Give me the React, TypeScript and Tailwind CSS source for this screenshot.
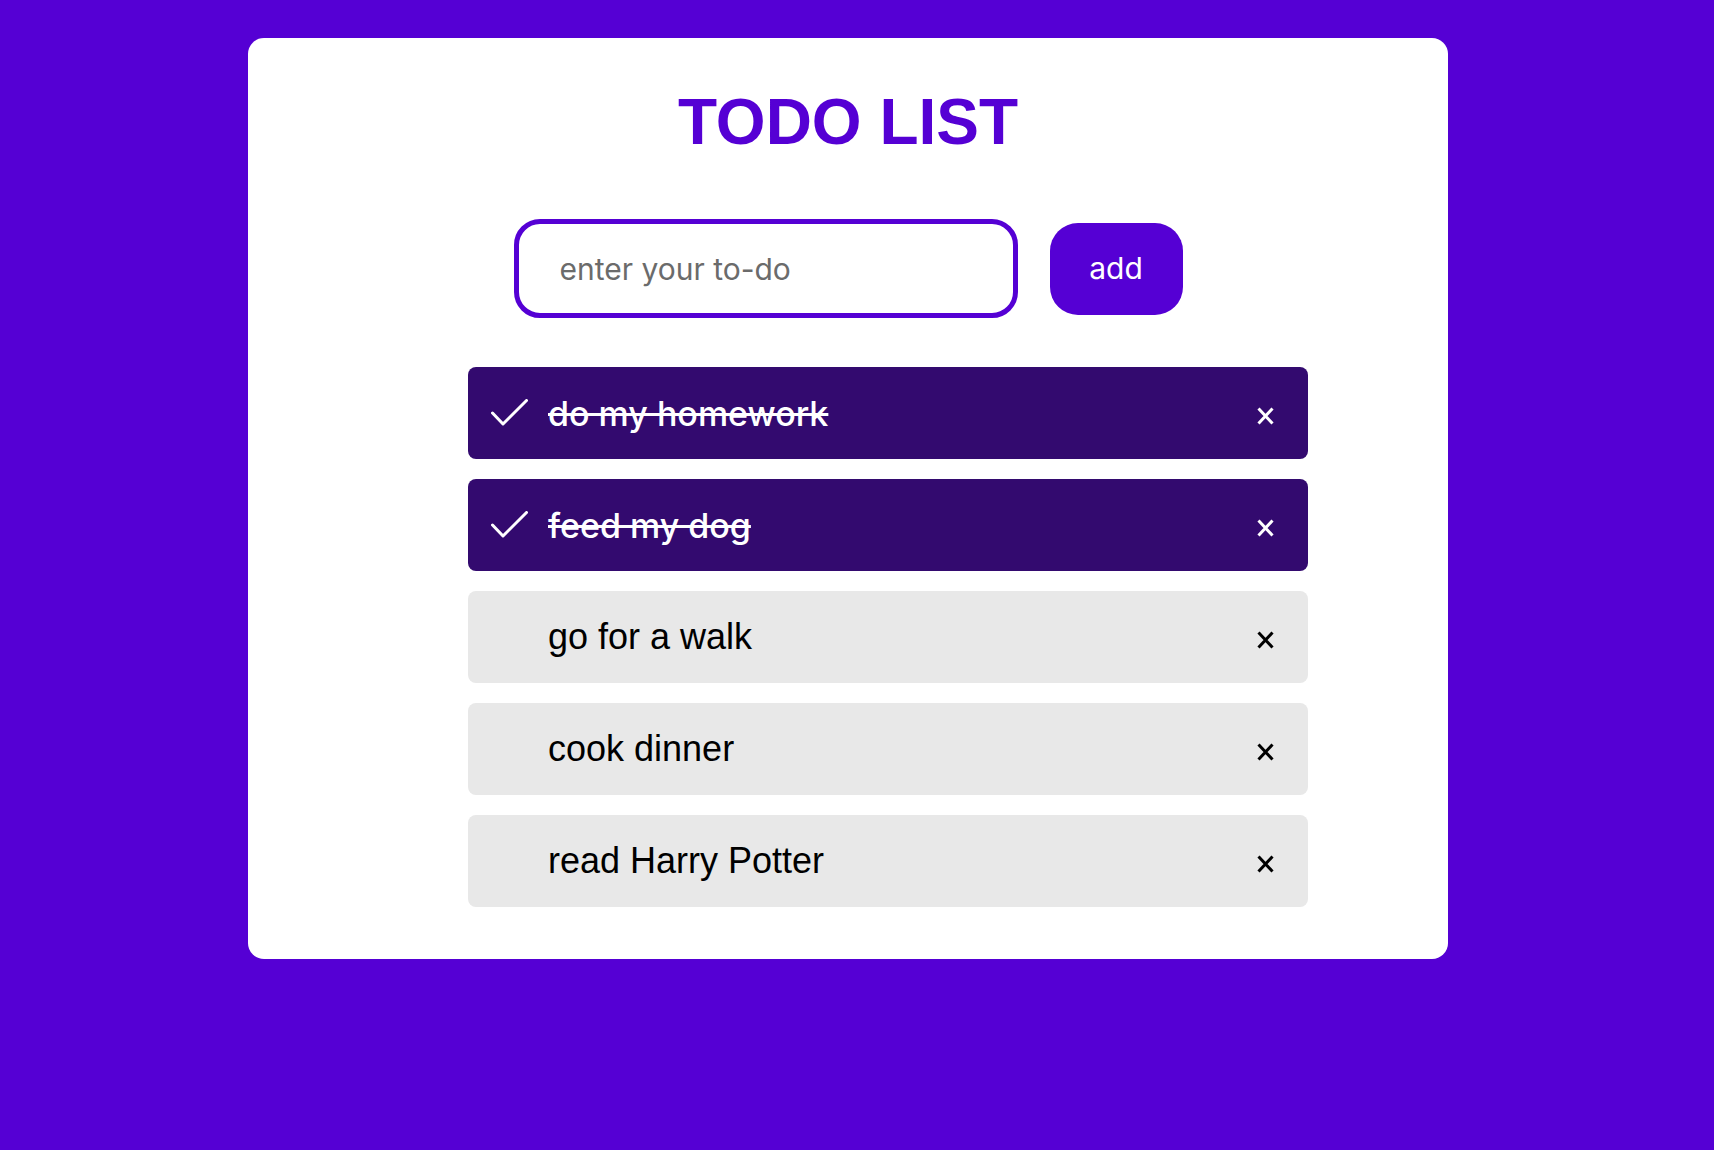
import { useState } from "react";

type Todo = { id: number; task: string; completed: boolean };

const initialTodos: Todo[] = [
  { id: 1, task: "do my homework", completed: true },
  { id: 2, task: "feed my dog", completed: true },
  { id: 3, task: "go for a walk", completed: false },
  { id: 4, task: "cook dinner", completed: false },
  { id: 5, task: "read Harry Potter", completed: false },
];

const Check = () => (
  <svg width="37" height="28" viewBox="0 0 37 28" fill="none">
    <polyline
      points="1.5,14 12,25 35.5,1.5"
      stroke="white"
      strokeWidth="3"
      strokeLinecap="round"
      strokeLinejoin="round"
    />
  </svg>
);

const Cross = ({ color }: { color: string }) => (
  <svg width="17" height="18" viewBox="0 0 17 18" fill="none">
    <path d="M1.5 1.5 L15.5 16.5 M15.5 1.5 L1.5 16.5" stroke={color} strokeWidth="3" />
  </svg>
);

const App = () => {
  const [todos, setTodos] = useState<Todo[]>(initialTodos);
  const [task, setTask] = useState("");

  const handleAdd = () => {
    if (!task.trim()) return;
    setTodos((prev) => [...prev, { id: Date.now(), task, completed: false }]);
    setTask("");
  };

  const handleToggle = (id: number) => {
    setTodos(todos.map((t) => (t.id === id ? { ...t, completed: !t.completed } : t)));
  };

  const handleDelete = (id: number) => {
    setTodos(todos.filter((t) => t.id !== id));
  };

  return (
    <main className="w-full min-h-[1150px] bg-[#5500d4] pt-[38px] font-['Liberation_Sans',Arial,sans-serif]">
      <div className="ml-[248px] w-[1200px] bg-white rounded-[16px] pt-[47px] pb-[52px]">
        <h1 className="text-center text-[64px] leading-[74px] font-bold text-[#5500d4]">
          TODO LIST
        </h1>

        <div className="mt-[60px] flex items-center justify-center gap-[32px]">
          <input
            autoFocus
            value={task}
            onChange={(e) => setTask(e.target.value)}
            onKeyDown={(e) => e.key === "Enter" && handleAdd()}
            placeholder="enter your to-do"
            className="w-[504px] h-[99px] border-[5px] border-[#5500d4] rounded-[26px] pl-[41px] pr-4 text-[30px] font-['Inter',sans-serif] text-black placeholder:text-[#6b6b6b] outline-none caret-black"
          />
          <button
            onClick={handleAdd}
            className="w-[133px] h-[92px] rounded-[28px] bg-[#5500d4] text-white text-[30px] font-['Inter',sans-serif]"
          >
            add
          </button>
        </div>

        <ul className="mt-[49px] ml-[220px] w-[840px] flex flex-col gap-[20px]">
          {todos.map((todo) => (
            <li
              key={todo.id}
              onClick={() => handleToggle(todo.id)}
              className={`h-[92px] rounded-[8px] flex items-center cursor-pointer ${
                todo.completed ? "bg-[#330a6f] text-white" : "bg-[#e8e8e8] text-black"
              }`}
            >
              <span className="w-[80px] pl-[23px] flex items-center">
                {todo.completed && <Check />}
              </span>
              <span
                className={`flex-1 ${
                  todo.completed
                    ? "line-through font-['Inter',sans-serif] font-medium text-[34px]"
                    : "text-[36px]"
                }`}
              >
                {todo.task}
              </span>
              <button
                onClick={(e) => {
                  e.stopPropagation();
                  handleDelete(todo.id);
                }}
                className="mr-[34px] mt-[6px] flex items-center"
              >
                <Cross color={todo.completed ? "white" : "black"} />
              </button>
            </li>
          ))}
        </ul>
      </div>
    </main>
  );
};

export default App;
